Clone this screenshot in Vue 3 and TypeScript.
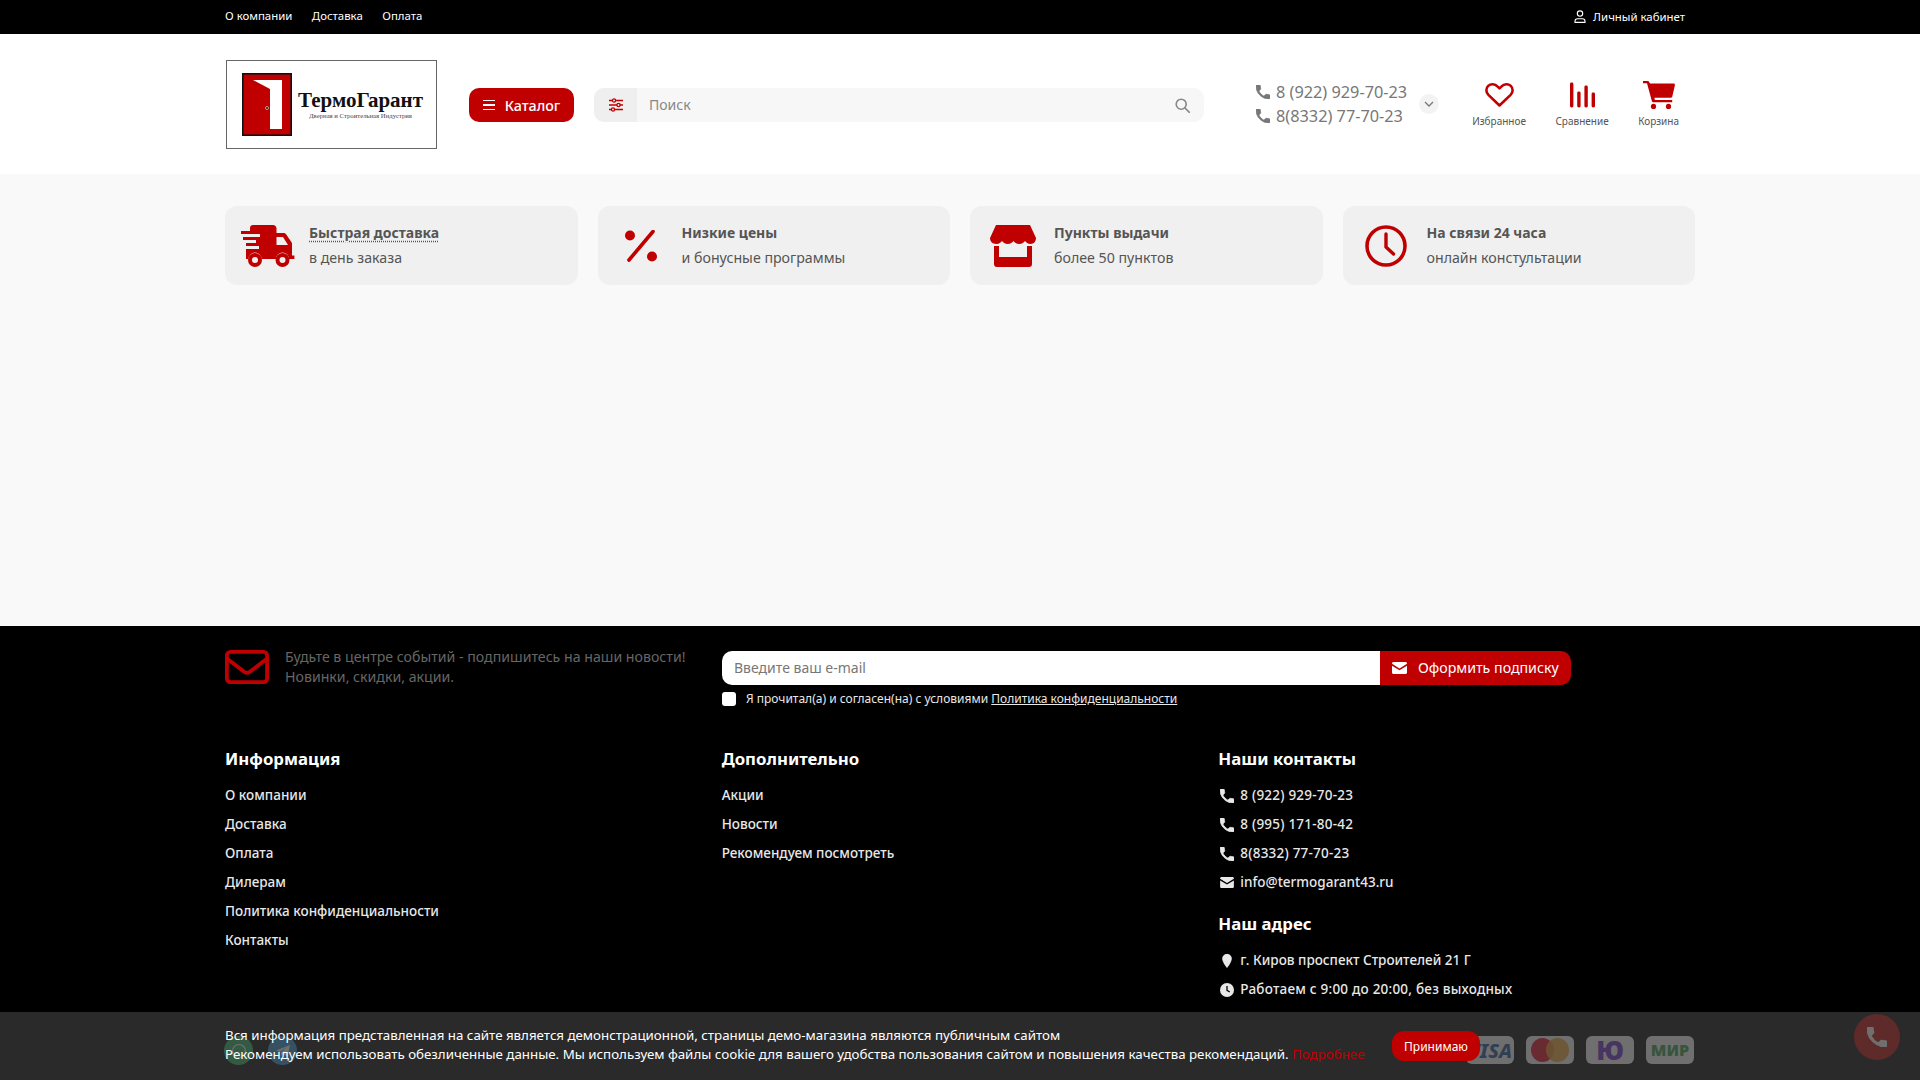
<template>
  <div class="page">
    <div class="topbar">
      <div class="wrap topbar-in">
        <nav class="top-nav">
          <a v-for="item in topLinks" :key="item">{{ item }}</a>
        </nav>
        <a class="cabinet">
          <svg width="12" height="13" viewBox="0 0 12 13" fill="none" stroke="#fff" stroke-width="1.1">
            <circle cx="6" cy="3.6" r="2.7" />
            <path d="M1 12.4v-1.2c0-1.5 1.2-2.500 2.600-2.500h4.800c1.400 0 2.600 1 2.600 2.500v1.200z" />
          </svg>
          Личный кабинет
        </a>
      </div>
    </div>

    <header class="header">
      <div class="wrap header-in">
        <div class="logo">
          <svg class="door" width="50" height="63" viewBox="0 0 50 63">
            <rect x="0.8" y="0.8" width="48.4" height="61.4" fill="#c00000" stroke="#111" stroke-width="1.6" />
            <path d="M11 7h29v49H28V16z" fill="#fff" />
            <circle cx="25" cy="35" r="1.5" fill="#111" stroke="#fff" stroke-width=".6" />
          </svg>
          <div class="logo-text">
            <div class="logo-name">ТермоГарант</div>
            <div class="logo-sub">Дверная и Строительная Индустрия</div>
          </div>
        </div>

        <button class="catalog">
          <span class="burger"><i></i><i></i><i></i></span>
          Каталог
        </button>

        <div class="search">
          <div class="search-filter">
            <svg width="14" height="14" viewBox="0 0 14 14" stroke="#c00000" stroke-width="1.3" fill="#f1f1f1">
              <path d="M0 2.500h14M0 7h14M0 11.500h14" />
              <circle cx="5" cy="2.500" r="1.600" />
              <circle cx="9.500" cy="7" r="1.600" />
              <circle cx="4" cy="11.500" r="1.600" />
            </svg>
          </div>
          <div class="search-input">Поиск</div>
          <svg class="search-ico" width="15" height="15" viewBox="0 0 15 15" fill="none" stroke="#888" stroke-width="1.6">
            <circle cx="6.200" cy="6.200" r="5" />
            <path d="M10 10l4.400 4.400" stroke-linecap="round" />
          </svg>
        </div>

        <div class="phones">
          <div class="phones-list">
            <div v-for="p in headerPhones" :key="p" class="phone">
              <svg width="14" height="14" viewBox="3 3 18 18" fill="#777"><path :d="callPath" stroke="#777" stroke-width="1" /></svg>
              {{ p }}
            </div>
          </div>
          <span class="chev">
            <svg width="10" height="6" viewBox="0 0 10 6" fill="none" stroke="#777" stroke-width="1.3"><path d="M1 1l4 4 4-4" /></svg>
          </span>
        </div>

        <div class="actions">
          <a class="action">
            <svg width="29" height="25" viewBox="0 0 29 25" fill="none" stroke="#c00000" stroke-width="2.6" stroke-linejoin="round">
              <path d="M14.500 23 3.400 12.400C.6 9.600.9 5.600 3.200 3.400c2.500-2.400 6.700-2.300 9.200.4l2.100 2.100 2.100-2.100c2.500-2.700 6.700-2.800 9.200-.4 2.300 2.200 2.600 6.200-.2 9z" />
            </svg>
            <span>Избранное</span>
          </a>
          <a class="action">
            <svg width="25" height="25" viewBox="0 0 25 25" fill="#c00000">
              <rect x="0" y="0" width="3.400" height="25" rx="1.400" />
              <rect x="7.200" y="9" width="3.400" height="16" rx="1.400" />
              <rect x="14.400" y="3" width="3.400" height="22" rx="1.400" />
              <rect x="21.600" y="10" width="3.400" height="15" rx="1.400" />
            </svg>
            <span>Сравнение</span>
          </a>
          <a class="action">
            <svg width="32" height="28" viewBox="0 0 32 28" fill="#c00000">
              <path d="M0 0h4.600c.8 0 1.400.4 1.700 1.200L7 2.600h23.600c.9 0 1.500.8 1.300 1.700l-2.600 11.200c-.2.8-.8 1.200-1.600 1.200H11.400l.5 2.400h17.300v2.200H10.200c-.7 0-1.100-.4-1.300-1L4 2.200H0z" />
              <circle cx="10.500" cy="25.400" r="2.600" />
              <circle cx="25.500" cy="25.400" r="2.600" />
            </svg>
            <span>Корзина</span>
          </a>
        </div>
      </div>
    </header>

    <main class="main">
      <div class="wrap features">
        <div v-for="f in features" :key="f.title" class="feature">
          <div class="feature-ico">
            <svg v-if="f.icon === 'truck'" width="54" height="42" viewBox="0 0 54 42" fill="#c00000">
              <path d="M12 0h20c2 0 3.500 1.500 3.500 3.500V8h7c1 0 2 .5 2.600 1.300l5.400 8c.5.7.5 1.200.5 2v11.200h2.400v3.500H48a6.500 6.500 0 0 0-13 0H20.500a6.500 6.500 0 0 0-13 0H5V24h13v-3H5v-3h10v-3H2v-3h17V9H0V6h9V3c0-2 1.300-3 3-3z" />
              <path d="M35.500 12v8H47l-5-8z" fill="#f0f0f0" />
              <circle cx="14" cy="35" r="5" fill="none" stroke="#c00000" stroke-width="4" />
              <circle cx="41.500" cy="35" r="5" fill="none" stroke="#c00000" stroke-width="4" />
            </svg>
            <svg v-else-if="f.icon === 'percent'" width="34" height="32" viewBox="0 0 34 32" fill="#c00000">
              <ellipse cx="6" cy="5.500" rx="5" ry="5" />
              <ellipse cx="28" cy="26.500" rx="5" ry="5" />
              <path d="M29 1.500 5 30" stroke="#c00000" stroke-width="3.600" stroke-linecap="round" />
            </svg>
            <svg v-else-if="f.icon === 'store'" width="46" height="42" viewBox="0 0 46 42" fill="#c00000">
              <path d="M6 0h34l6 13c0 3-2 6-5.500 6-2.500 0-4.500-1.500-5.500-3-1 1.500-3 3-5.800 3-2.700 0-4.700-1.500-5.700-3-1 1.500-3 3-5.700 3-2.800 0-4.800-1.500-5.800-3-1 1.500-3 3-5.500 3C2 19 0 16 0 13z" />
              <path d="M4 21h5v11h28V21h5v18c0 2-1 3-3 3H7c-2 0-3-1-3-3z" />
            </svg>
            <svg v-else width="42" height="42" viewBox="0 0 42 42" fill="none" stroke="#c00000">
              <circle cx="21" cy="21" r="19" stroke-width="3.600" />
              <path d="M21 9v13l7.500 7" stroke-width="3.400" stroke-linecap="round" stroke-linejoin="round" />
            </svg>
          </div>
          <div class="feature-text">
            <div class="feature-title" :class="{ dotted: f.dotted }">{{ f.title }}</div>
            <div class="feature-sub">{{ f.sub }}</div>
          </div>
        </div>
      </div>
    </main>

    <footer class="footer">
      <div class="wrap">
        <div class="subscribe">
          <div class="sub-lead">
            <svg width="44" height="34" viewBox="0 0 44 34" fill="none" stroke="#c00000" stroke-width="3.800" stroke-linejoin="round">
              <rect x="1.900" y="1.900" width="40.200" height="30.200" rx="3.500" />
              <path d="M2.500 9 19.500 22c1.500 1.100 3.500 1.100 5 0L41.500 9" stroke-linecap="round" />
            </svg>
            <p>Будьте в центре событий - подпишитесь на наши новости!<br />Новинки, скидки, акции.</p>
          </div>
          <div class="sub-form">
            <div class="sub-row">
              <div class="sub-input">Введите ваш e-mail</div>
              <button class="sub-btn">
                <svg width="15" height="12" viewBox="0 0 15 12" fill="#fff">
                  <path d="M1.500 0h12C14.300 0 15 .7 15 1.500v.3L7.500 6.500 0 1.800v-.3C0 .7.700 0 1.500 0z" />
                  <path d="M0 3.700 7.500 8.300 15 3.700v6.800c0 .8-.7 1.500-1.500 1.500h-12C.7 12 0 11.300 0 10.500z" />
                </svg>
                <span class="sub-btn-text">Оформить подписку</span>
              </button>
            </div>
            <label class="agree">
              <span class="check"></span>
              <span>Я прочитал(а) и согласен(на) с условиями <u>Политика конфиденциальности</u></span>
            </label>
          </div>
        </div>

        <div class="cols">
          <div class="col">
            <h4>Информация</h4>
            <a v-for="l in infoLinks" :key="l">{{ l }}</a>
          </div>
          <div class="col">
            <h4>Дополнительно</h4>
            <a v-for="l in moreLinks" :key="l">{{ l }}</a>
          </div>
          <div class="col">
            <h4>Наши контакты</h4>
            <a v-for="c in contacts" :key="c.text" class="with-ico" :class="{ wide: c.icon === 'phone' }">
              <svg v-if="c.icon === 'phone'" width="14" height="14" viewBox="3 3 18 18" fill="#e8e8e8"><path :d="callPath" stroke="#e8e8e8" stroke-width="1" /></svg>
              <svg v-else width="14" height="11" viewBox="0 0 15 12" fill="#e8e8e8">
                <path d="M1.500 0h12C14.300 0 15 .7 15 1.500v.3L7.500 6.500 0 1.800v-.3C0 .7.700 0 1.500 0z" />
                <path d="M0 3.700 7.500 8.300 15 3.700v6.800c0 .8-.7 1.500-1.500 1.500h-12C.7 12 0 11.300 0 10.500z" />
              </svg>
              {{ c.text }}
            </a>
            <h4 class="h-addr">Наш адрес</h4>
            <a class="with-ico">
              <svg width="14" height="14" viewBox="0 0 14 14" fill="#e8e8e8"><path d="M7 0C4.200 0 2.200 2.100 2.200 4.800 2.200 8.200 7 14 7 14s4.800-5.800 4.800-9.200C11.800 2.100 9.800 0 7 0z" /></svg>
              г. Киров проспект Строителей 21 Г
            </a>
            <a class="with-ico wide">
              <svg width="14" height="14" viewBox="0 0 14 14"><circle cx="7" cy="7" r="7" fill="#e8e8e8" /><path d="M7 3v4.300l2.800 1.700" fill="none" stroke="#000" stroke-width="1.300" /></svg>
              Работаем с 9:00 до 20:00, без выходных
            </a>
          </div>
        </div>

        <div class="bottom">
          <div class="messengers">
            <span class="msg msg-wa">
              <svg width="16" height="16" viewBox="0 0 16 16" fill="none" stroke="#fff" stroke-width="1.200"><circle cx="8" cy="8" r="6.500" /></svg>
            </span>
            <span class="msg msg-tg">
              <svg width="16" height="16" viewBox="0 0 16 16" fill="#fff"><path d="M1 7.500 15 2l-2.500 12-4.200-3-2 2-.4-3.500L12 4 4.500 9z" /></svg>
            </span>
          </div>
          <div class="pays">
            <span class="pay pay-visa">VISA</span>
            <span class="pay pay-mc"><i></i><i></i></span>
            <span class="pay pay-yu">Ю</span>
            <span class="pay pay-mir">МИР</span>
          </div>
        </div>
      </div>
    </footer>

    <a class="call-float">
      <svg width="20" height="20" viewBox="3 3 18 18" fill="#fff"><path :d="callPath" stroke="#fff" stroke-width="1" /></svg>
    </a>

    <div class="cookie">
      <div class="cookie-text">
        Вся информация представленная на сайте является демонстрационной, страницы демо-магазина являются публичным сайтом<br />
        Рекомендуем использовать обезличенные данные. Мы используем файлы cookie для вашего удобства пользования сайтом и повышения качества рекомендаций.
        <a>Подробнее</a>
      </div>
      <button class="cookie-btn">Принимаю</button>
    </div>
  </div>
</template>

<script setup lang="ts">
interface Feature {
  icon: string;
  title: string;
  sub: string;
  dotted?: boolean;
}

const callPath =
  "M6.62 10.79c1.44 2.83 3.76 5.14 6.59 6.59l2.2-2.2c.27-.27.67-.36 1.02-.24 1.12.37 2.33.57 3.57.57.55 0 1 .45 1 1V20c0 .55-.45 1-1 1-9.39 0-17-7.61-17-17 0-.55.45-1 1-1h3.5c.55 0 1 .45 1 1 0 1.25.2 2.45.57 3.57.11.35.03.74-.25 1.02l-2.2 2.2z";

const topLinks = ["О компании", "Доставка", "Оплата"];
const headerPhones = ["8 (922) 929-70-23", "8(8332) 77-70-23"];

const features: Feature[] = [
  { icon: "truck", title: "Быстрая доставка", sub: "в день заказа", dotted: true },
  { icon: "percent", title: "Низкие цены", sub: "и бонусные программы" },
  { icon: "store", title: "Пункты выдачи", sub: "более 50 пунктов" },
  { icon: "clock", title: "На связи 24 часа", sub: "онлайн констультации" },
];

const infoLinks = ["О компании", "Доставка", "Оплата", "Дилерам", "Политика конфиденциальности", "Контакты"];
const moreLinks = ["Акции", "Новости", "Рекомендуем посмотреть"];
const contacts = [
  { icon: "phone", text: "8 (922) 929-70-23" },
  { icon: "phone", text: "8 (995) 171-80-42" },
  { icon: "phone", text: "8(8332) 77-70-23" },
  { icon: "mail", text: "info@termogarant43.ru" },
];
</script>

<style>
html, body { margin: 0; background: #000; overflow: hidden; }
</style>

<style scoped>
.page {
  position: relative;
  height: 1080px;
  overflow: hidden;
  font-family: "Noto Sans", "Open Sans", sans-serif;
  background: #f9f9f9;
  color: #555;
}

.wrap {
  width: 1470px;
  margin: 0 auto;
}

/* top */
.topbar {
  height: 34px;
  background: #000;
  color: #fff;
  font-size: 11.4px;
}
.topbar-in {
  height: 100%;
  display: flex;
  align-items: center;
  justify-content: space-between;
}
.top-nav {
  display: flex;
  gap: 19.5px;
  padding-bottom: 4px;
}
.cabinet {
  display: flex;
  align-items: center;
  gap: 7px;
  margin-right: 10px;
  padding-bottom: 2px;
}

/* header */
.header {
  height: 140px;
  background: #fff;
}
.header-in {
  height: 100%;
  display: flex;
  align-items: center;
}
.logo {
  width: 209px;
  height: 87px;
  margin-left: 1px;
  margin-top: 1px;
  border: 1px solid #666;
  display: flex;
  align-items: center;
  background: #fff;
  flex: none;
}
.door {
  margin-left: 15px;
  margin-right: 6px;
  flex: none;
}
.logo-name {
  font-family: "Liberation Serif", serif;
  font-weight: 700;
  font-size: 21px;
  line-height: 22px;
  color: #111;
  white-space: nowrap;
}
.logo-sub {
  font-family: "Liberation Serif", serif;
  font-size: 6.7px;
  line-height: 9px;
  color: #444;
  text-align: center;
  white-space: nowrap;
}
.catalog {
  margin: 2px 0 0 32px;
  width: 105px;
  height: 34px;
  border: none;
  border-radius: 10px;
  background: #c00000;
  color: #fff;
  font: 500 14.3px "Noto Sans", sans-serif;
  display: flex;
  align-items: center;
  justify-content: center;
  gap: 10px;
  padding: 0;
  flex: none;
}
.burger {
  display: flex;
  flex-direction: column;
  gap: 3px;
}
.burger i {
  display: block;
  width: 12px;
  height: 1.5px;
  background: #fff;
}
.search {
  margin: 2px 0 0 20px;
  width: 610px;
  height: 34px;
  border-radius: 10px;
  background: #f7f7f7;
  display: flex;
  align-items: center;
  overflow: hidden;
  flex: none;
}
.search-filter {
  width: 43px;
  height: 100%;
  background: #efefef;
  display: flex;
  align-items: center;
  justify-content: center;
  flex: none;
}
.search-input {
  flex: 1;
  padding-left: 12px;
  padding-bottom: 1px;
  font-size: 14px;
  color: #888;
}
.search-ico {
  margin-right: 14px;
}
.phones {
  margin-left: 52px;
  display: flex;
  align-items: center;
  gap: 12px;
}
.phones-list {
  display: flex;
  flex-direction: column;
  gap: 4px;
}
.phone {
  display: flex;
  align-items: center;
  gap: 6px;
  font-size: 16.3px;
  line-height: 20px;
  color: #777;
  white-space: nowrap;
}
.chev {
  width: 20px;
  height: 20px;
  border-radius: 50%;
  background: #f3f3f3;
  display: flex;
  align-items: center;
  justify-content: center;
}
.actions {
  display: flex;
  margin-left: 33px;
  gap: 29.5px;
}
.action {
  display: flex;
  flex-direction: column;
  align-items: center;
  gap: 6px;
  font-size: 10px;
  line-height: 13px;
  color: #555;
}
.action svg {
  height: 28px;
  margin-top: 1px;
}

/* features */
.main {
  height: 452px;
  padding-top: 32px;
  box-sizing: border-box;
}
.features {
  display: grid;
  grid-template-columns: repeat(4, 1fr);
  gap: 20px;
}
.feature {
  height: 79px;
  border-radius: 12px;
  background: #f0f0f0;
  display: flex;
  align-items: center;
}
.feature-ico {
  width: 84px;
  box-sizing: border-box;
  padding-left: 2px;
  display: flex;
  justify-content: center;
  flex: none;
}
.feature-title {
  font-size: 14px;
  font-weight: 700;
  line-height: 18px;
  color: #555;
}
.feature-title.dotted {
  text-decoration: underline dotted #555;
  text-underline-offset: 3px;
}
.feature-sub {
  margin-top: 7px;
  font-size: 14.2px;
  line-height: 18px;
  color: #555;
}

/* footer */
.footer {
  height: 454px;
  background: #000;
  color: #e8e8e8;
  padding-top: 25px;
  box-sizing: border-box;
}
.subscribe {
  display: grid;
  grid-template-columns: 497px 1fr;
  height: 76px;
}
.sub-lead {
  display: flex;
  align-items: flex-start;
  gap: 16px;
}
.sub-lead svg {
  margin-top: -1px;
}
.sub-lead p {
  margin: -4px 0 0;
  font-size: 14.15px;
  line-height: 20px;
  color: #666;
  white-space: nowrap;
}
.sub-row {
  display: flex;
  width: 849px;
  height: 34px;
}
.sub-input {
  flex: 1;
  background: #fff;
  border-radius: 10px 0 0 10px;
  padding-left: 12px;
  font-size: 14px;
  line-height: 34px;
  color: #777;
}
.sub-btn {
  width: 191px;
  border: none;
  border-radius: 0 10px 10px 0;
  background: #c00000;
  color: #fff;
  font: 14.2px "Noto Sans", sans-serif;
  display: flex;
  align-items: center;
  gap: 11px;
  padding: 0 0 0 12px;
}
.sub-btn-text {
  margin-top: -2px;
}
.agree {
  display: flex;
  align-items: center;
  gap: 10px;
  margin-top: 7px;
  font-size: 12px;
  line-height: 14px;
  color: #e8e8e8;
}
.check {
  width: 14px;
  height: 14px;
  border-radius: 3px;
  background: #fff;
}
.cols {
  display: grid;
  grid-template-columns: repeat(3, 1fr);
  gap: 20px;
  margin-top: 20px;
}
.col {
  display: flex;
  flex-direction: column;
  align-items: flex-start;
}
.col h4 {
  margin: 0 0 10px;
  font-size: 16.8px;
  font-weight: 700;
  line-height: 24px;
  color: #fff;
}
.col a {
  font-size: 13.5px;
  font-weight: 500;
  line-height: 29px;
  height: 29px;
}
.with-ico {
  display: flex;
  align-items: center;
  gap: 6px;
  padding-left: 2px;
}
.col a.wide {
  letter-spacing: 0.22px;
}
.col .h-addr {
  margin-top: 15px;
}
.bottom {
  position: absolute;
  left: 224px;
  right: 226px;
  top: 1036px;
  display: flex;
  justify-content: space-between;
}
.messengers {
  display: flex;
  gap: 15px;
}
.msg {
  width: 29px;
  height: 29px;
  border-radius: 50%;
  display: flex;
  align-items: center;
  justify-content: center;
}
.msg-wa { background: #25b060; }
.msg-tg { background: #2a8fd0; }
.pays {
  display: flex;
  gap: 12px;
}
.pay {
  width: 48px;
  height: 28px;
  border-radius: 6px;
  background: #fff;
  display: flex;
  align-items: center;
  justify-content: center;
  font-weight: 800;
}
.pay-visa {
  color: #1a4f9c;
  font-size: 20px;
  font-style: italic;
}
.pay-mc i {
  display: block;
  width: 23px;
  height: 24px;
  border-radius: 50%;
  background: #eb001b;
}
.pay-mc i + i {
  background: #f79e1b;
  margin-left: -8px;
  opacity: .85;
}
.pay-yu {
  color: #6a2bc9;
  font-size: 26px;
  font-weight: 900;
}
.pay-mir {
  color: #2f9e44;
  font-size: 16px;
  font-weight: 900;
}

/* overlay */
.call-float {
  position: absolute;
  left: 1854px;
  top: 1014px;
  width: 46px;
  height: 46px;
  border-radius: 50%;
  background: #c00000;
  display: flex;
  align-items: center;
  justify-content: center;
}
.cookie {
  position: absolute;
  left: 0;
  right: 0;
  bottom: 0;
  height: 68px;
  background: rgba(58, 58, 58, 0.73);
  color: #fff;
  box-sizing: border-box;
  padding: 14px 0 0 225px;
  display: flex;
  align-items: flex-start;
}
.cookie-text {
  font-size: 13.32px;
  line-height: 19px;
  white-space: nowrap;
}
.cookie-text a {
  color: #c00000;
}
.cookie-btn {
  position: absolute;
  left: 1392px;
  top: 19px;
  width: 88px;
  height: 30px;
  border: none;
  border-radius: 12px;
  background: #c00000;
  color: #fff;
  font: 12px "Noto Sans", sans-serif;
  padding: 0;
}
</style>
